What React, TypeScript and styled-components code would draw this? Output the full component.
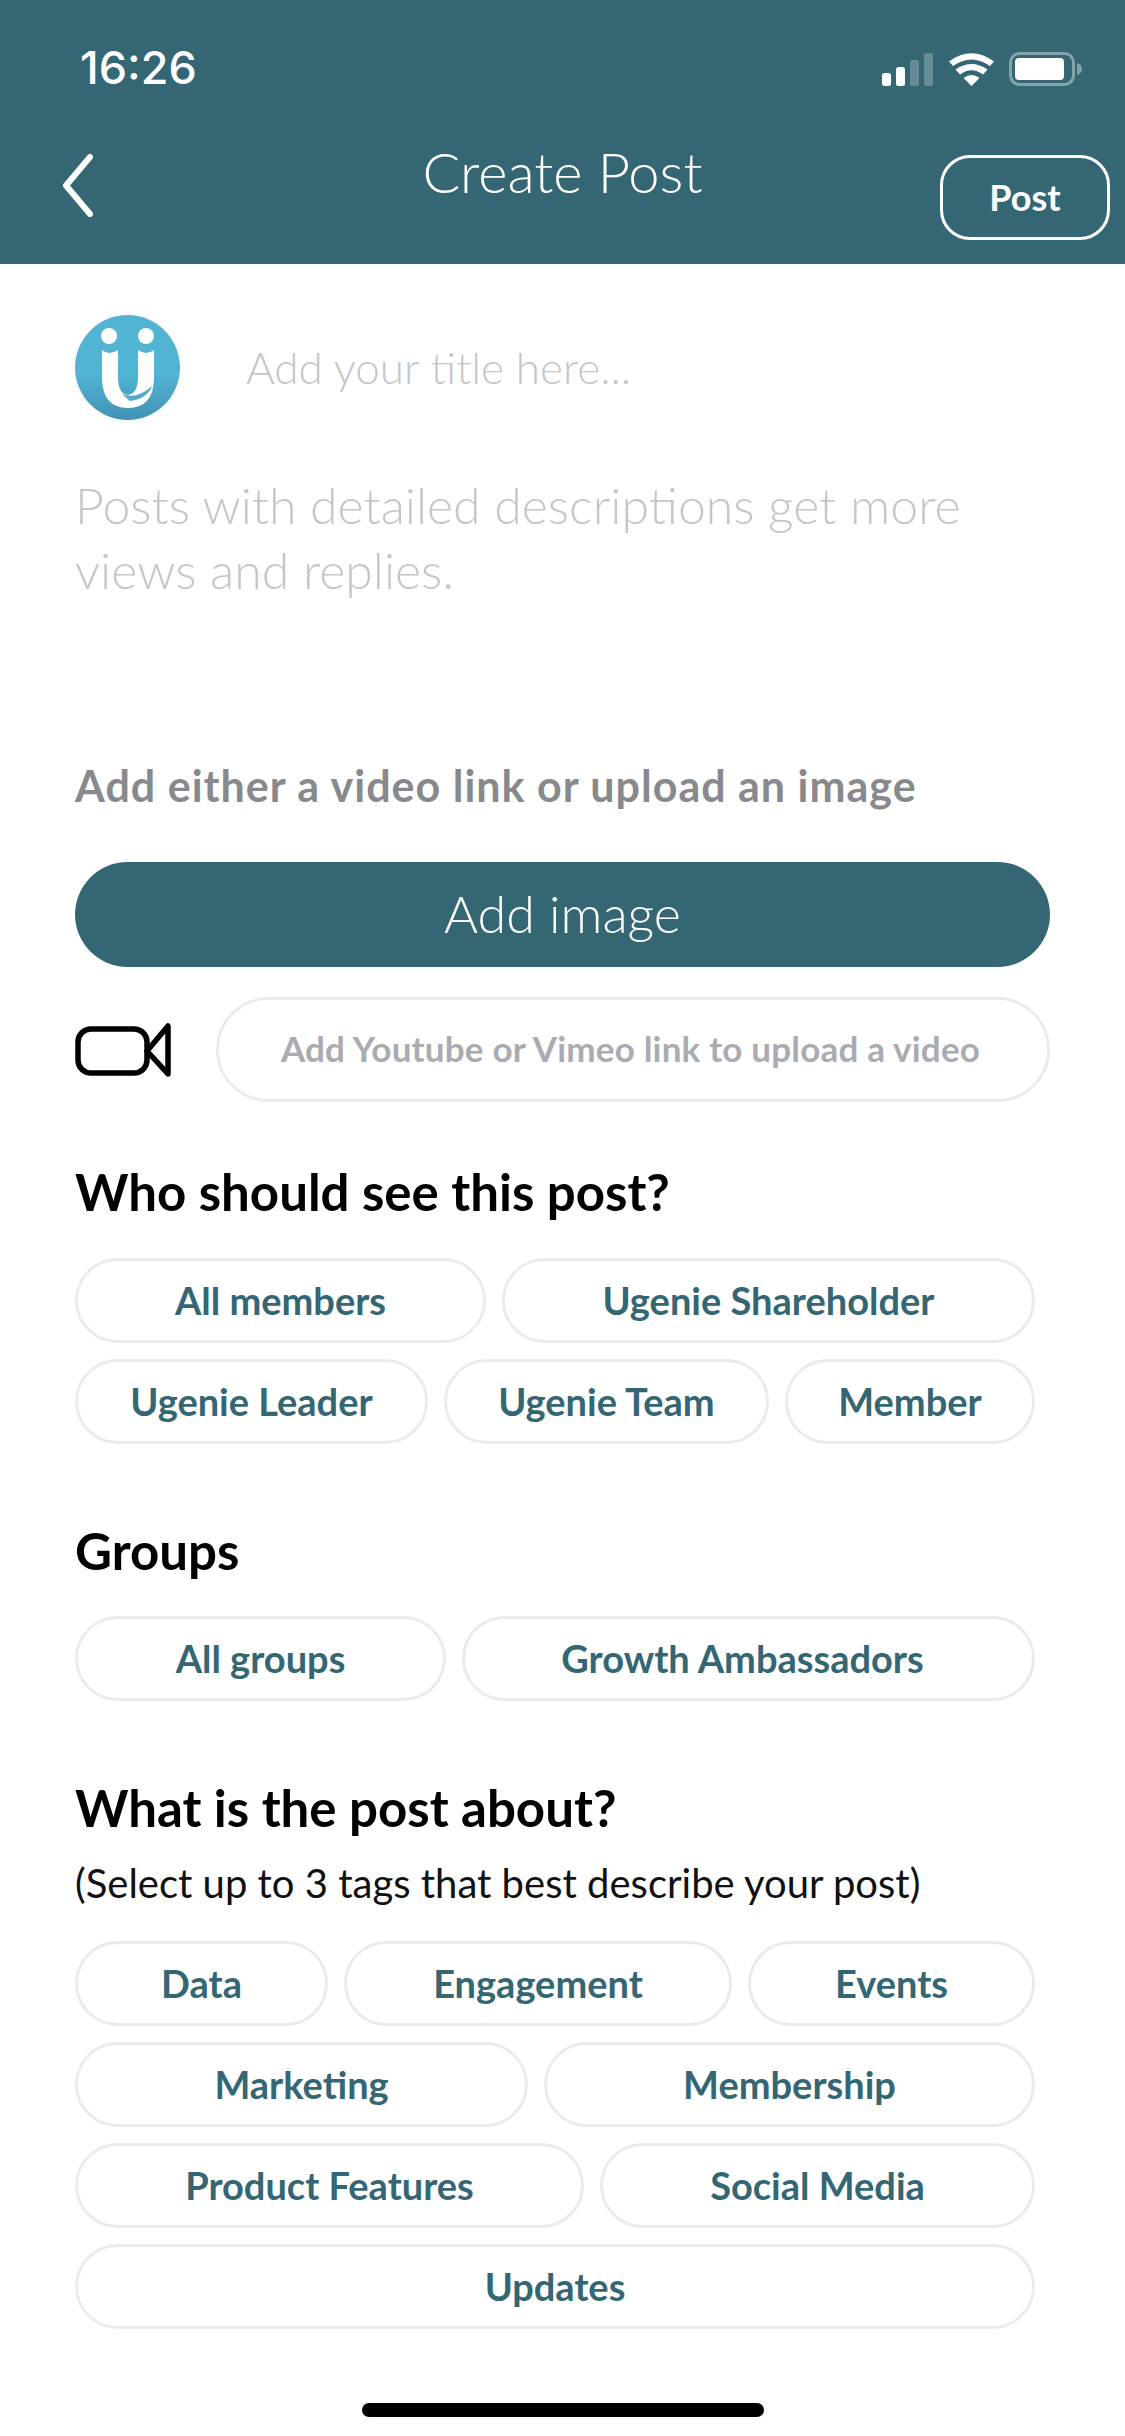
import React from "react";
import styled, { createGlobalStyle } from "styled-components";

const teal = "#346674";

const GlobalStyle = createGlobalStyle`
  html, body { margin: 0; padding: 0; background: #fff; }
  body { font-family: Lato, "Open Sans", sans-serif; }
`;

const Page = styled.div`
  width: 1125px;
  height: 2436px;
  position: relative;
  overflow: hidden;
  background: #fff;
`;

const Header = styled.header`
  height: 264px;
  background: ${teal};
  color: #fff;
`;

const StatusBar = styled.div`
  height: 136px;
  box-sizing: border-box;
  padding: 38px 43px 0 80px;
  display: flex;
  justify-content: space-between;
  align-items: flex-start;
`;

const Clock = styled.span`
  font-family: Inter, "Liberation Sans", sans-serif;
  font-size: 45px;
  line-height: 60px;
  font-weight: 500;
`;

const StatusIcons = styled.div`
  display: flex;
  align-items: center;
  gap: 15.5px;
  padding-top: 14px;
`;

const NavBar = styled.div`
  display: grid;
  grid-template-columns: minmax(0, 1fr) auto minmax(0, 1fr);
  align-items: start;
  padding: 6px 15px 0;
`;

const BackButton = styled.div`
  display: flex;
  justify-self: start;
  margin: 12px 0 0 48px;
`;

const NavTitle = styled.div`
  font-size: 56px;
  font-weight: 300;
  line-height: 60px;
`;

const PostButton = styled.div`
  justify-self: end;
  margin-top: 13px;
  width: 170px;
  height: 85px;
  box-sizing: border-box;
  border: 3px solid #fff;
  border-radius: 30px;
  padding-bottom: 2px;
  display: flex;
  align-items: center;
  justify-content: center;
  font-size: 36px;
  font-weight: 700;
`;

const Content = styled.main`
  padding: 51px 75px 0;
`;

const TitleRow = styled.div`
  display: flex;
  align-items: center;
  gap: 66px;
`;

const TitlePlaceholder = styled.div`
  font-size: 44px;
  font-weight: 300;
  color: #c4c6ca;
  padding-bottom: 2px;
`;

const Description = styled.div`
  margin-top: 53px;
  font-size: 50px;
  line-height: 65px;
  font-weight: 300;
  color: #c4c6ca;
  width: 920px;
`;

const MediaLabel = styled.div`
  margin-top: 158px;
  font-size: 43px;
  line-height: 50px;
  font-weight: 700;
  letter-spacing: 1px;
  color: #87898c;
`;

const AddImage = styled.div`
  margin-top: 51px;
  width: 975px;
  height: 105px;
  box-sizing: border-box;
  padding-bottom: 4px;
  border-radius: 53px;
  background: ${teal};
  color: #fff;
  display: flex;
  align-items: center;
  justify-content: center;
  font-size: 52px;
  font-weight: 300;
`;

const VideoRow = styled.div`
  margin-top: 30px;
  display: flex;
  align-items: center;
  gap: 45px;
`;

const VideoInput = styled.div`
  width: 834px;
  height: 105px;
  box-sizing: border-box;
  padding: 0 5px 3px 0;
  border: 3px solid #e9ecec;
  border-radius: 53px;
  display: flex;
  align-items: center;
  justify-content: center;
  font-size: 35px;
  font-weight: 700;
  letter-spacing: 0.2px;
  color: #a9abb0;
`;

const Heading = styled.h2<{ $top: number }>`
  margin: ${(p) => p.$top}px 0 0;
  font-size: 51px;
  line-height: 60px;
  font-weight: 700;
  color: #000;
`;

const Hint = styled.p`
  margin: 21px 0 0;
  font-size: 40px;
  line-height: 48px;
  font-weight: 400;
  color: #111;
`;

const ChipGroup = styled.div<{ $top: number }>`
  margin-top: ${(p) => p.$top}px;
  display: flex;
  flex-direction: column;
  gap: 16px;
`;

const ChipRow = styled.div`
  display: flex;
  gap: 16px;
`;

const Chip = styled.div<{ $w: number; $shift?: number }>`
  width: ${(p) => p.$w}px;
  height: 85px;
  box-sizing: border-box;
  padding: 0 ${(p) => p.$shift ?? 0}px 2px 0;
  border: 3px solid #e9ecec;
  border-radius: 43px;
  display: flex;
  align-items: center;
  justify-content: center;
  font-size: 38px;
  font-weight: 700;
  color: ${teal};
`;

const HomeIndicator = styled.div`
  position: absolute;
  left: 362px;
  bottom: 19px;
  width: 402px;
  height: 14px;
  border-radius: 7px;
  background: #000;
`;

const Logo = () => (
  <svg width="105" height="105" viewBox="0 0 105 105">
    <defs>
      <linearGradient id="logoFill" x1="0" y1="0" x2="0" y2="1">
        <stop offset="0.55" stopColor="#52b4d3" />
        <stop offset="1" stopColor="#4292b4" />
      </linearGradient>
    </defs>
    <circle cx="52.5" cy="52.5" r="52.5" fill="url(#logoFill)" />
    <circle cx="34" cy="21" r="8" fill="#fff" />
    <circle cx="71" cy="21" r="8" fill="#fff" />
    <path
      d="M27 35 Q34 41 43 35 V62 Q43 79 53 80 Q63 78 63 62 V35 Q71 41 79 35 V62 Q79 93 53 93 Q27 93 27 62 Z"
      fill="#fff"
    />
    <path d="M47 79 Q62 85 77 71 Q72 84 55 86 Z" fill="#52a8c8" />
  </svg>
);

const SignalIcon = () => (
  <svg width="51" height="33" viewBox="0 0 51 33">
    <rect x="0" y="20" width="9" height="13" rx="2.5" fill="#fff" />
    <rect x="14" y="14" width="9" height="19" rx="2.5" fill="#fff" />
    <rect x="28" y="7" width="9" height="26" rx="2.5" fill="#fff" opacity="0.25" />
    <rect x="42" y="0" width="9" height="33" rx="2.5" fill="#fff" opacity="0.25" />
  </svg>
);

const WifiIcon = () => (
  <svg width="45" height="33" viewBox="0 0 45 33">
    <path d="M22.5 33 L14.5 25 Q22.5 19 30.5 25 Z" fill="#fff" />
    <path d="M11 21.5 L6.5 16.5 Q22.5 5.5 38.5 16.5 L34 21.5 Q22.5 13 11 21.5 Z" fill="#fff" />
    <path d="M4 13 L0 8.5 Q22.5 -8 45 8.5 L41 13 Q22.5 0 4 13 Z" fill="#fff" />
  </svg>
);

const BatteryIcon = () => (
  <svg width="73" height="34" viewBox="0 0 73 34">
    <rect x="1.5" y="1.5" width="63" height="31" rx="9" fill="none" stroke="#fff" strokeOpacity="0.4" strokeWidth="3" />
    <rect x="6" y="6" width="49" height="22" rx="4" fill="#fff" />
    <path d="M68 11 Q73 13 73 17 Q73 21 68 23 Z" fill="#fff" fillOpacity="0.4" />
  </svg>
);

const ChevronIcon = () => (
  <svg width="30" height="63" viewBox="0 0 30 63">
    <path d="M27 3 L3 31.5 L27 60" fill="none" stroke="#fff" strokeWidth="6" strokeLinecap="round" strokeLinejoin="round" />
  </svg>
);

const VideoIcon = () => (
  <svg width="96" height="54" viewBox="0 0 96 54">
    <rect x="3" y="6" width="69" height="44" rx="13" fill="none" stroke="#000" strokeWidth="5.5" />
    <path d="M93 3 V51 L72 28 Z" fill="none" stroke="#000" strokeWidth="5.5" strokeLinejoin="round" />
  </svg>
);

type ChipDef = [string, number, number?];

const audience: ChipDef[][] = [
  [["All members", 411], ["Ugenie Shareholder", 533]],
  [["Ugenie Leader", 353], ["Ugenie Team", 325], ["Member", 250]],
];

const groups: ChipDef[][] = [[["All groups", 371], ["Growth Ambassadors", 573, 12]]];

const tags: ChipDef[][] = [
  [["Data", 253], ["Engagement", 388], ["Events", 287]],
  [["Marketing", 453], ["Membership", 491]],
  [["Product Features", 509], ["Social Media", 435]],
  [["Updates", 960]],
];

const Chips = ({ rows, top }: { rows: ChipDef[][]; top: number }) => (
  <ChipGroup $top={top}>
    {rows.map((row, i) => (
      <ChipRow key={i}>
        {row.map(([label, w, shift]) => (
          <Chip key={label} $w={w} $shift={shift}>{label}</Chip>
        ))}
      </ChipRow>
    ))}
  </ChipGroup>
);

export default function App() {
  return (
    <Page>
      <GlobalStyle />
      <Header>
        <StatusBar>
          <Clock>16:26</Clock>
          <StatusIcons>
            <SignalIcon />
            <WifiIcon />
            <BatteryIcon />
          </StatusIcons>
        </StatusBar>
        <NavBar>
          <BackButton>
            <ChevronIcon />
          </BackButton>
          <NavTitle>Create Post</NavTitle>
          <PostButton>Post</PostButton>
        </NavBar>
      </Header>
      <Content>
        <TitleRow>
          <Logo />
          <TitlePlaceholder>Add your title here...</TitlePlaceholder>
        </TitleRow>
        <Description>Posts with detailed descriptions get more views and replies.</Description>
        <MediaLabel>Add either a video link or upload an image</MediaLabel>
        <AddImage>Add image</AddImage>
        <VideoRow>
          <VideoIcon />
          <VideoInput>Add Youtube or Vimeo link to upload a video</VideoInput>
        </VideoRow>
        <Heading $top={60}>Who should see this post?</Heading>
        <Chips rows={audience} top={36} />
        <Heading $top={77}>Groups</Heading>
        <Chips rows={groups} top={35} />
        <Heading $top={77}>What is the post about?</Heading>
        <Hint>(Select up to 3 tags that best describe your post)</Hint>
        <Chips rows={tags} top={34} />
      </Content>
      <HomeIndicator />
    </Page>
  );
}
